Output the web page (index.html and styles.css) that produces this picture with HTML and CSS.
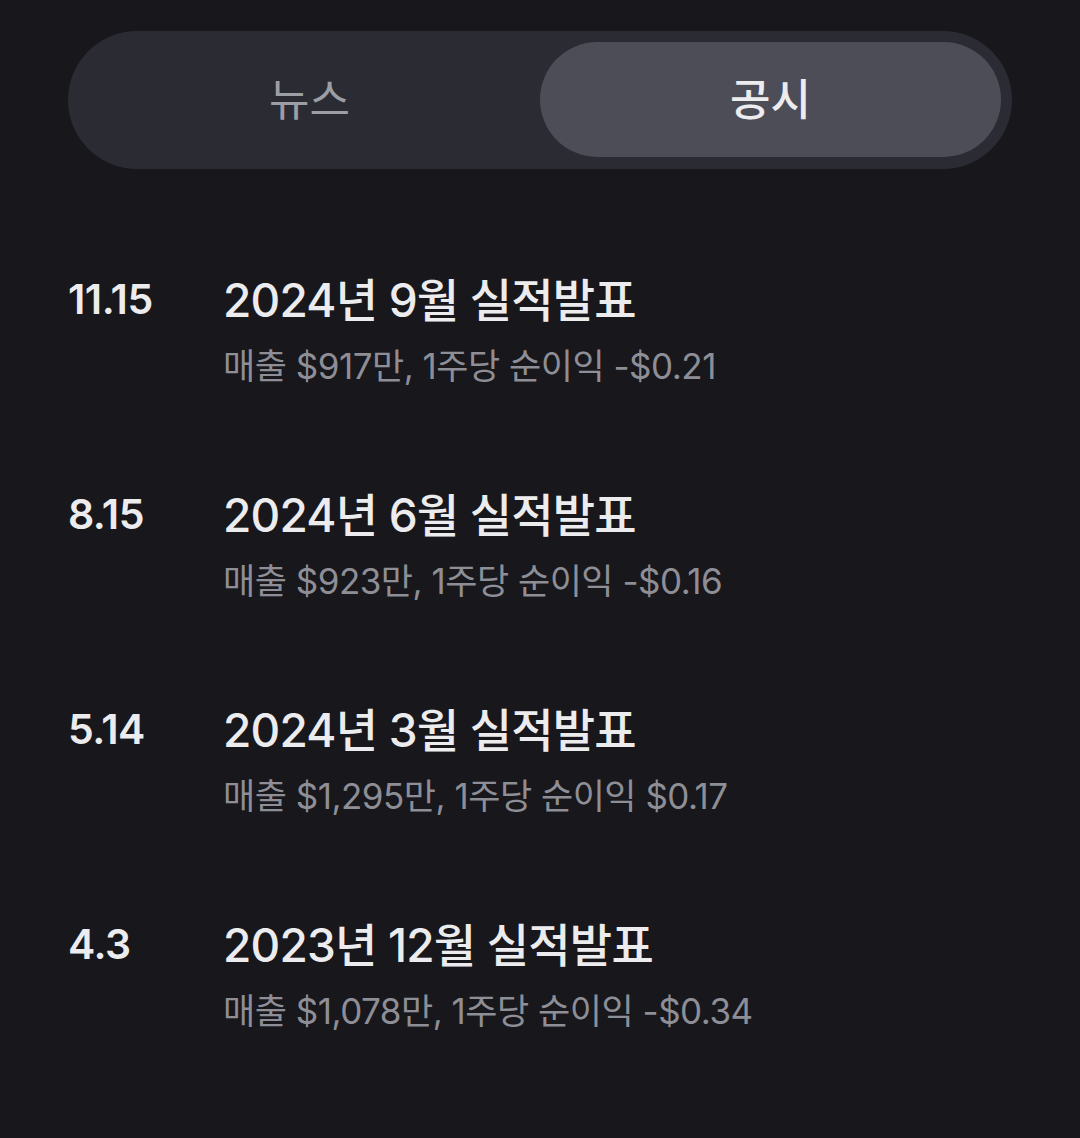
FILE: index.html
```html
<!DOCTYPE html>
<html lang="ko">
<head>
  <meta charset="UTF-8">
  <meta name="viewport" content="width=device-width, initial-scale=1.0">
  <title>공시</title>
  <link rel="stylesheet" href="styles.css">
</head>
<body>
  <div class="page">
    <!-- Tabs -->
    <div class="tabs">
      <div class="tab">뉴스</div>
      <div class="tab active">공시</div>
    </div>

    <!-- Disclosure list -->
    <ul class="list">
      <li class="item">
        <div class="date">11.15</div>
        <div class="body">
          <div class="title">2024년 9월 실적발표</div>
          <div class="desc">매출 $917만, 1주당 순이익 -$0.21</div>
        </div>
      </li>
      <li class="item">
        <div class="date">8.15</div>
        <div class="body">
          <div class="title">2024년 6월 실적발표</div>
          <div class="desc">매출 $923만, 1주당 순이익 -$0.16</div>
        </div>
      </li>
      <li class="item">
        <div class="date">5.14</div>
        <div class="body">
          <div class="title">2024년 3월 실적발표</div>
          <div class="desc">매출 $1,295만, 1주당 순이익 $0.17</div>
        </div>
      </li>
      <li class="item">
        <div class="date">4.3</div>
        <div class="body">
          <div class="title">2023년 12월 실적발표</div>
          <div class="desc">매출 $1,078만, 1주당 순이익 -$0.34</div>
        </div>
      </li>
    </ul>
  </div>
</body>
</html>
```

FILE: styles.css
```css
* {
  margin: 0;
  padding: 0;
  box-sizing: border-box;
}

body {
  background-color: #17171c;
  font-family: 'Inter', 'Noto Sans CJK KR', sans-serif;
  color: #e9e9eb;
  min-height: 100vh;
}

.page {
  padding: 31px 68px;
}

.tabs {
  display: grid;
  grid-template-columns: 1fr 1fr;
  height: 138px;
  padding: 11px 11px 12px;
  background: #2b2c33;
  border-radius: 69px;
}

.tab {
  display: flex;
  align-items: center;
  justify-content: center;
  padding-bottom: 6px;
  font-size: 44px;
  font-weight: 400;
  color: #9d9da5;
  border-radius: 58px;
}

.tab.active {
  background: #4d4d58;
  color: #ececee;
  font-weight: 500;
}

.list {
  list-style: none;
  padding-top: 105px;
  display: flex;
  flex-direction: column;
  gap: 101px;
}

.item {
  display: flex;
}

.date {
  width: 155px;
  flex-shrink: 0;
  font-size: 41px;
  line-height: 50px;
  font-weight: 600;
  letter-spacing: -0.5px;
  color: #ececee;
}

.title {
  font-size: 46px;
  line-height: 52px;
  font-weight: 500;
  letter-spacing: -0.8px;
  color: #ececee;
}

.desc {
  margin-top: 18px;
  font-size: 35px;
  line-height: 44px;
  letter-spacing: -0.5px;
  color: #8e8e96;
}
```
